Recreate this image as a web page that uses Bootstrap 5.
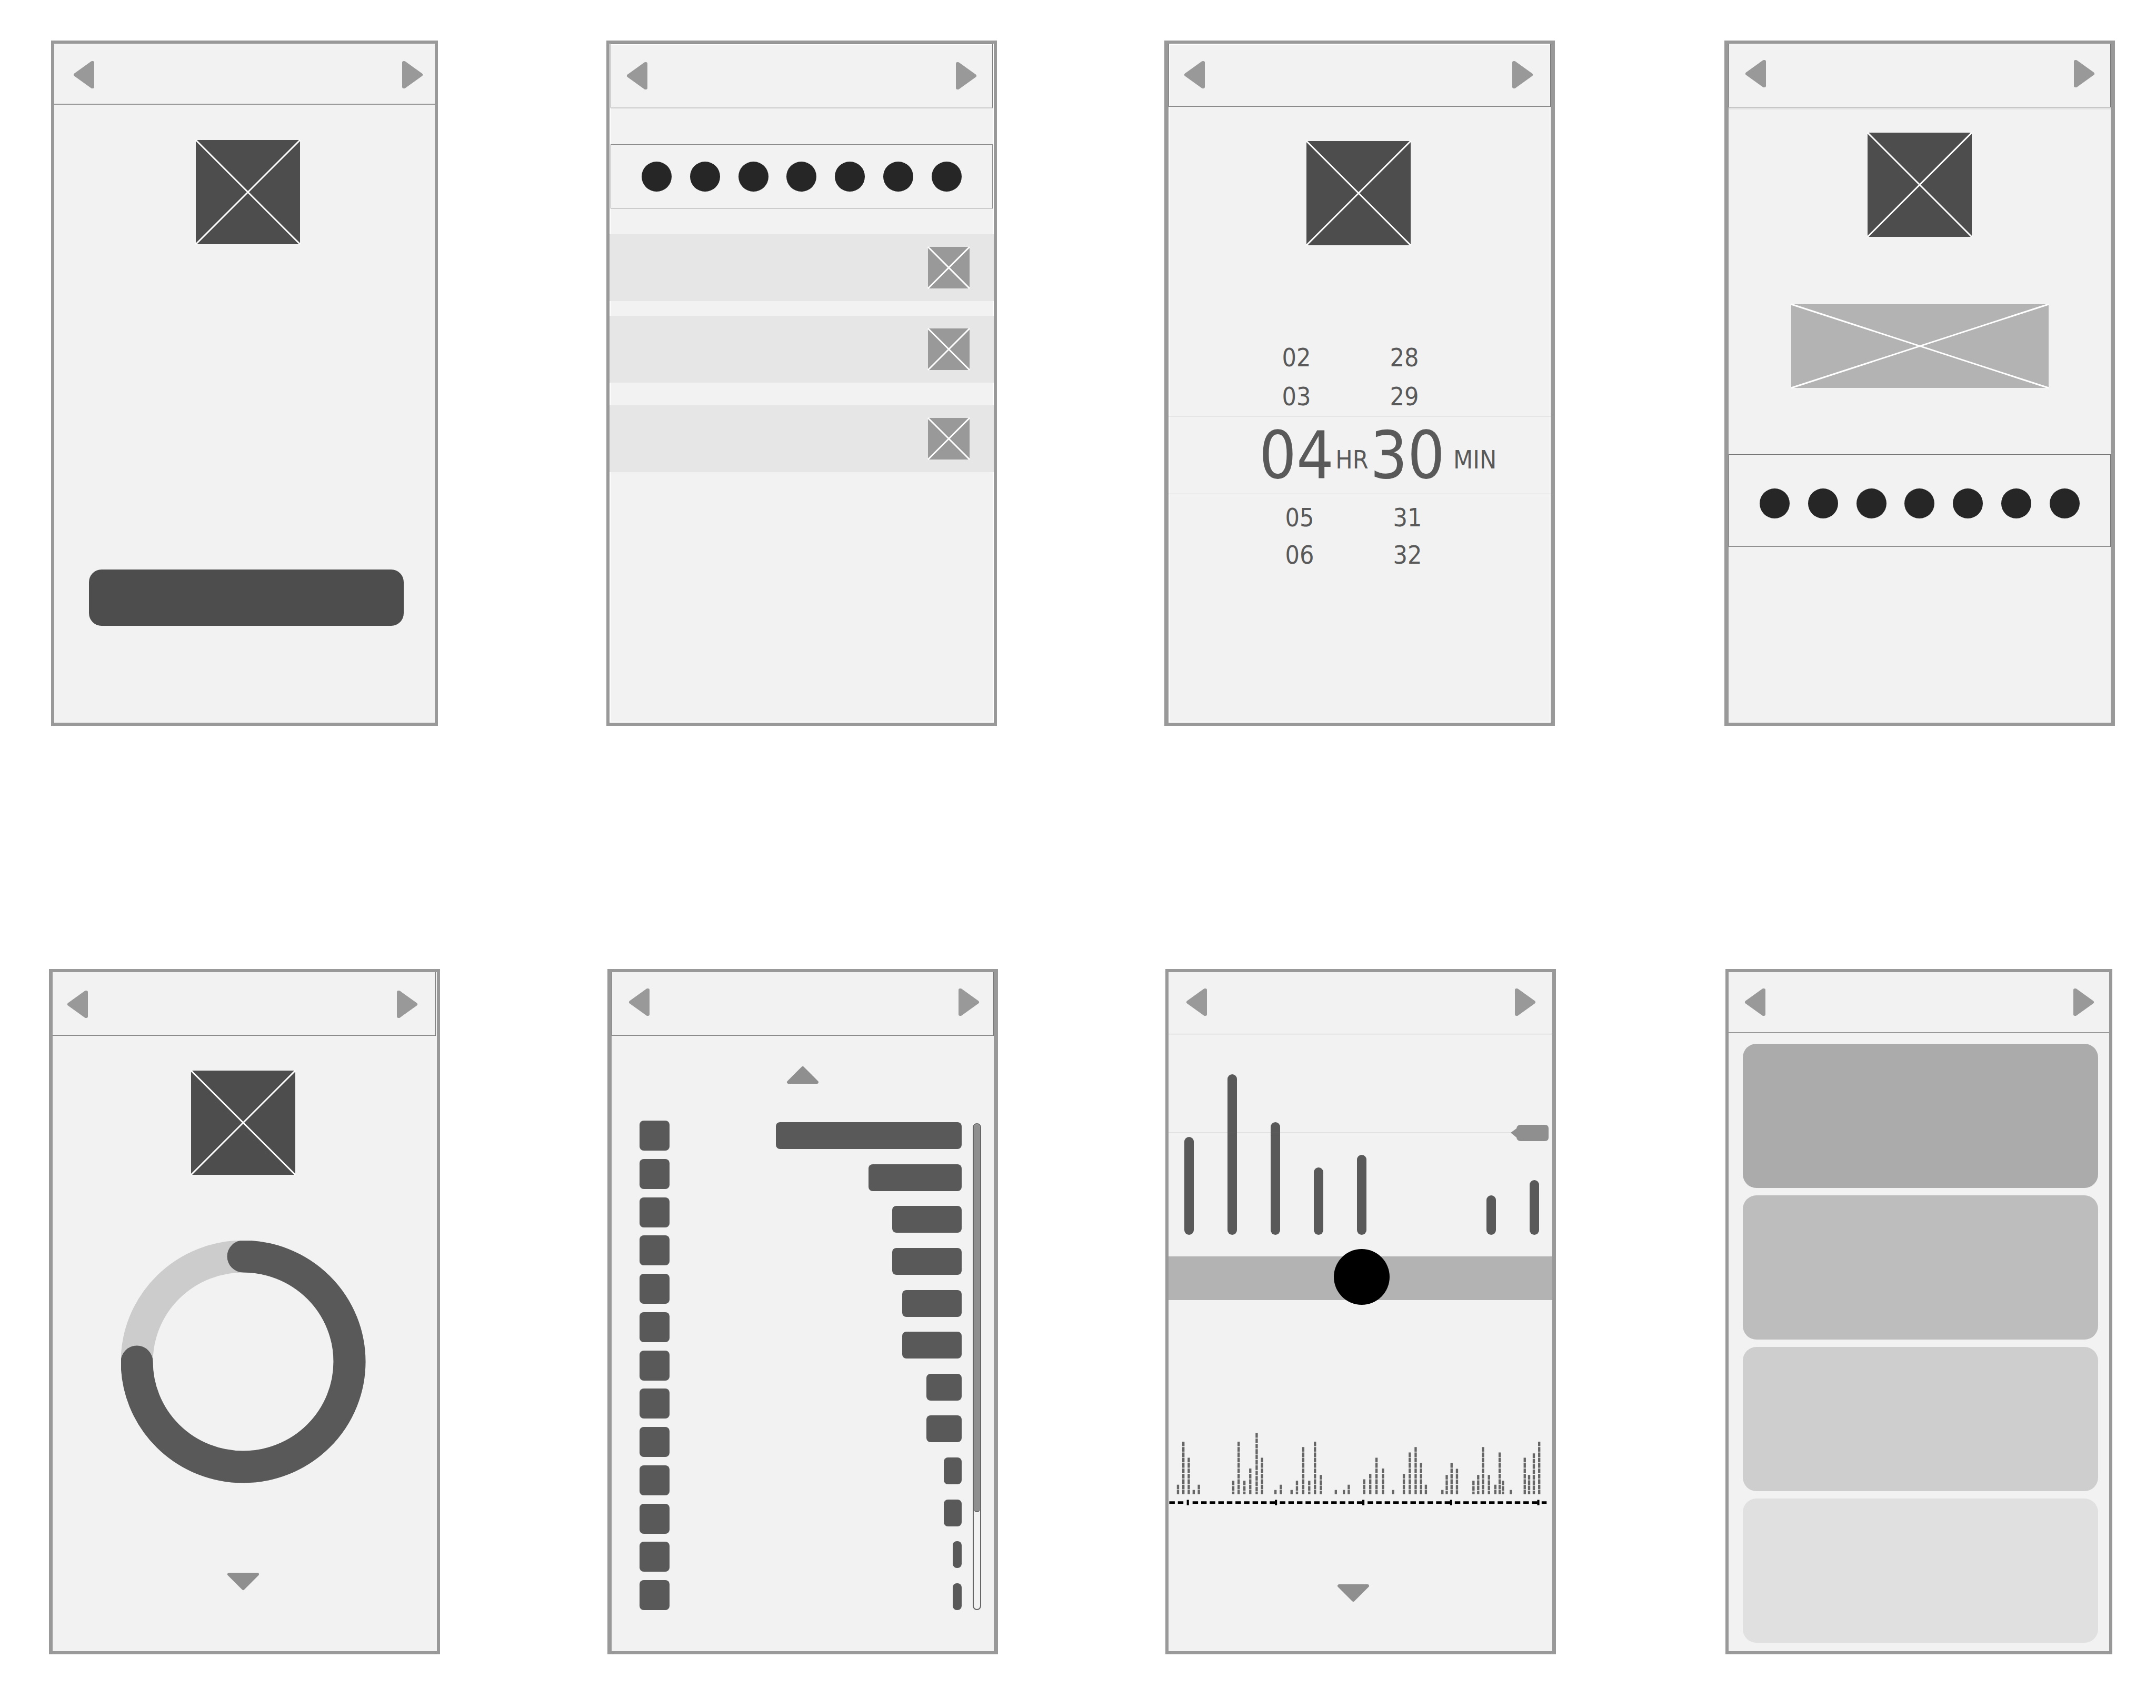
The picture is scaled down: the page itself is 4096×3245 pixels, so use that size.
<!DOCTYPE html>
<html lang="en">
<head>
<meta charset="utf-8">
<meta name="viewport" content="width=device-width, initial-scale=1">
<title>Sleep app wireframes</title>
<link rel="stylesheet" href="https://cdn.jsdelivr.net/npm/bootstrap@5.3.0/dist/css/bootstrap.min.css">
<script src="https://cdn.jsdelivr.net/npm/bootstrap@5.3.0/dist/js/bootstrap.bundle.min.js"></script>
<style>
  body { background: #fff; color: #595959; font-family: "DejaVu Sans Condensed", "Liberation Sans", sans-serif; }
  .board { padding-top: 77px; padding-bottom: 99px; row-gap: 462px; }
  .board-row { display: grid; column-gap: 318px; }
  .row-top { grid-template-columns: 737fr 742fr 742fr 746fr; padding-left: 97px; padding-right: 78px; }
  .row-bottom { grid-template-columns: 743fr 742fr 742fr 739fr; padding-left: 93px; padding-right: 83px; }

  .screen { display: flex; flex-direction: column; min-height: 1302px; background: #f2f2f2; border: 6px solid #999; min-width: 0; }
  .screen-start { margin-right: 2px; }
  .edge-light { box-shadow: inset 0 0 0 2px #fff; }
  .edge-wide { border-left-width: 8px; border-right-width: 8px; }
  .edge-left { border-left-width: 7px; }
  .edge-right { border-right-width: 7px; }

  .topbar { display: flex; align-items: flex-start; justify-content: space-between; height: var(--bar-h); padding: var(--bar-top) var(--bar-right) 0 var(--bar-left); }
  .topbar-line { border-bottom: 2px solid #999; }
  .topbar-thin { border-bottom: 1px solid #666; }
  .topbar-box { border: 1px solid #777; border-top: 0; }
  .icon-btn { display: block; padding: 0; border: 0; background: none; line-height: 0; color: #999; }
  .icon-btn svg { fill: currentColor; stroke: currentColor; stroke-width: 6px; stroke-linejoin: round; display: block; }
  .more { color: #8f8f8f; }

  .thumb { display: block; background: #4d4d4d; stroke: #fff; stroke-width: 3px; overflow: visible; }
  .thumb-sm { background: #999; }
  .thumb-wide { background: #b3b3b3; width: 489px; height: 159px; }

  .s1 { --bar-h: 116px; --bar-top: 32px; --bar-left: 36px; --bar-right: 22px; }
  .s2 { --bar-h: 123px; --bar-top: 33px; --bar-left: 29px; --bar-right: 29px; }
  .s3 { --bar-h: 120px; --bar-top: 32px; --bar-left: 28px; --bar-right: 32px; }
  .s4 { --bar-h: 121px; --bar-top: 30px; --bar-left: 30px; --bar-right: 29px; }
  .s5 { --bar-h: 121px; --bar-top: 34px; --bar-left: 27px; --bar-right: 33px; }
  .s6 { --bar-h: 121px; --bar-top: 30px; --bar-left: 31px; --bar-right: 26px; }
  .s7 { --bar-h: 118px; --bar-top: 30px; --bar-left: 33px; --bar-right: 31px; }
  .s8 { --bar-h: 116px; --bar-top: 30px; --bar-left: 30px; --bar-right: 28px; }

  .s1 .content { padding: 67px 59px 0 66px; }
  .s1 .thumb { margin-left: 203px; }
  .cta { display: block; width: 100%; height: 107px; margin-top: 618px; border: 0; border-radius: 24px; background: #4d4d4d; }

  .s2 .topbar, .s2 .day-dots { margin-left: 2px; margin-right: 2px; }
  .s2 .topbar { border-top: 1px solid #777; border-bottom: 2px solid #ccc; }
  .day-dots { display: flex; justify-content: space-between; border: 1px solid #777; padding: 32px 58px 0; }
  .day-dots span { width: 57px; height: 57px; border-radius: 50%; background: #262626; }
  .s2 .day-dots { height: 123px; margin-top: 68px; border-color: #888; border-bottom: 2px solid #ccc; }
  .rows { margin-top: 48px; display: flex; flex-direction: column; gap: 28px; }
  .rows > li { height: 127px; padding-right: 46px; background: #e6e6e6; display: flex; align-items: center; justify-content: flex-end; }
  .rows > li:last-child { margin-top: 15px; }

  .s3 .thumb { margin: 65px auto 0; }
  .s3 .content { padding-right: 4px; }
  .picker { margin-top: 176px; line-height: 1; }
  .pick { display: grid; grid-template-columns: 122px 83px 122px; align-items: center; justify-items: center; height: 74px; padding-left: 182px; font-size: 48px; }
  .pick span:last-child { grid-column: 3; }
  .pick-after .pick { height: 71px; padding-left: 188px; }
  .pick-after { padding-top: 8px; }
  .pick-now { display: grid; grid-template-columns: 122px 89px 122px 1fr; align-items: center; justify-items: center; height: 149px; padding-left: 182px; border-top: 1px solid #b3b3b3; border-bottom: 1px solid #b3b3b3; font-size: 124px; }
  .pick-now .unit { font-size: 48px; padding-top: 16px; }
  .pick-now .unit:last-child { justify-self: start; padding-left: 26px; }

  .s4 .topbar { box-shadow: 0 4px 0 #e2e2e2; }
  .s4 .thumb { margin: 48px auto 0; }
  .s4 .thumb-wide { margin-top: 128px; }
  .s4 .day-dots { height: 176px; margin-top: 126px; padding-top: 64px; }

  .s5 .topbar { margin-right: 2px; border-left: 0; }
  .s5 .content { display: flex; flex-direction: column; align-items: center; padding: 66px 6px 0 0; }
  .ring { margin-top: 125px; fill: none; stroke-width: 61px; stroke-linecap: round; }
  .s5 .more { margin-top: 170px; }

  .s6 .up { margin: 57px auto 0; }
  .list-chart { display: flex; height: 930px; margin-top: 70px; padding: 0 24px 0 53px; }
  .stack { display: flex; flex-direction: column; justify-content: space-between; }
  .stack span { display: block; background: #595959; }
  .keys span { width: 57px; height: 57px; border-radius: 8px; }
  .values { flex: 1; align-items: flex-end; padding: 3px 0 0; margin-right: 21px; }
  .values span { height: 51px; border-radius: 8px; }
  .track { width: 16px; margin-top: 5px; border: 2px solid #666; border-radius: 8px; overflow: hidden; }
  .track div { height: 80%; background: #8f8f8f; border-bottom: 2px solid #666; border-radius: 0 0 6px 6px; }

  .bars { position: relative; display: flex; align-items: flex-end; justify-content: space-between; height: 381px; padding: 0 25px 0 30px; }
  .bars > i { width: 18px; background: #595959; border-radius: 9px; }
  .goal { position: absolute; left: 0; right: 7px; top: 172px; display: flex; align-items: center; }
  .goal hr { flex: 1; margin: 0; border-top: 1px solid #666; opacity: 1; }
  .goal svg { fill: #8f8f8f; }
  .band { display: flex; align-items: center; justify-content: center; height: 83px; margin-top: 41px; padding: 0 0 6px 5px; background: #b3b3b3; }
  .knob { flex: none; width: 106px; height: 106px; padding: 0; border: 0; border-radius: 50%; background: #000; }
  .activity { display: block; width: 100%; height: 141px; margin-top: 250px; fill: none; }
  .s7 .more { margin: 149px auto 0; }
  .s7 .foot { padding-right: 28px; }

  .tiles { display: flex; flex-direction: column; gap: 14px; padding: 20px 21px 0 27px; }
  .tiles > div { height: 274px; border-radius: 26px; }
  .tone-1 { background: #ababab; }
  .tone-2 { background: #bdbdbd; }
  .tone-3 { background: #cecece; }
  .tone-4 { background: #e0e0e0; }
</style>
</head>
<body>
<svg class="d-none" aria-hidden="true">
  <symbol id="prev" viewBox="0 0 40 54"><path d="M4 27 36 4 37 4V50H36Z"/></symbol>
  <symbol id="next" viewBox="0 0 40 54"><path d="M36 27 4 4 3 4V50H4Z"/></symbol>
  <symbol id="down" viewBox="0 0 62 34"><path d="M4 3H58L31 30Z"/></symbol>
  <symbol id="up" viewBox="0 0 62 34"><path d="M4 31H58L31 4Z"/></symbol>
  <symbol id="cross" viewBox="0 0 100 100" preserveAspectRatio="none" overflow="visible"><path vector-effect="non-scaling-stroke" d="M0 0 100 100M100 0 0 100"/></symbol>
</svg>
<main class="board d-flex flex-column">
  <div class="board-row row-top">

    <section class="screen screen-start s1">
      <header class="topbar topbar-line">
        <button class="icon-btn" aria-label="Previous"><svg width="40" height="54"><use href="#prev"/></svg></button>
        <button class="icon-btn" aria-label="Next"><svg width="40" height="54"><use href="#next"/></svg></button>
      </header>
      <div class="content">
        <svg class="thumb" width="198" height="198"><use href="#cross"/></svg>
        <button class="cta" aria-label="Continue"></button>
      </div>
    </section>

    <section class="screen edge-light s2">
      <header class="topbar topbar-box">
        <button class="icon-btn" aria-label="Previous"><svg width="40" height="54"><use href="#prev"/></svg></button>
        <button class="icon-btn" aria-label="Next"><svg width="40" height="54"><use href="#next"/></svg></button>
      </header>
      <div class="day-dots"><span></span><span></span><span></span><span></span><span></span><span></span><span></span></div>
      <ul class="rows list-unstyled mb-0">
        <li><svg class="thumb thumb-sm" width="79" height="79"><use href="#cross"/></svg></li>
        <li><svg class="thumb thumb-sm" width="79" height="79"><use href="#cross"/></svg></li>
        <li><svg class="thumb thumb-sm" width="79" height="79"><use href="#cross"/></svg></li>
      </ul>
    </section>

    <section class="screen edge-light edge-wide s3">
      <header class="topbar topbar-box">
        <button class="icon-btn" aria-label="Previous"><svg width="40" height="54"><use href="#prev"/></svg></button>
        <button class="icon-btn" aria-label="Next"><svg width="40" height="54"><use href="#next"/></svg></button>
      </header>
      <div class="content">
        <svg class="thumb" width="198" height="198"><use href="#cross"/></svg>
      </div>
      <div class="picker">
        <div class="pick"><span>02</span><span>28</span></div>
        <div class="pick"><span>03</span><span>29</span></div>
        <div class="pick-now"><span>04</span><span class="unit">HR</span><span>30</span><span class="unit">MIN</span></div>
        <div class="pick-after">
          <div class="pick"><span>05</span><span>31</span></div>
          <div class="pick"><span>06</span><span>32</span></div>
        </div>
      </div>
    </section>

    <section class="screen edge-wide ms-1 s4">
      <header class="topbar topbar-box">
        <button class="icon-btn" aria-label="Previous"><svg width="40" height="54"><use href="#prev"/></svg></button>
        <button class="icon-btn" aria-label="Next"><svg width="40" height="54"><use href="#next"/></svg></button>
      </header>
      <svg class="thumb" width="198" height="198"><use href="#cross"/></svg>
      <svg class="thumb thumb-wide"><use href="#cross"/></svg>
      <div class="day-dots"><span></span><span></span><span></span><span></span><span></span><span></span><span></span></div>
    </section>
  </div>

  <div class="board-row row-bottom">

    <section class="screen edge-left s5">
      <header class="topbar topbar-box">
        <button class="icon-btn" aria-label="Previous"><svg width="40" height="54"><use href="#prev"/></svg></button>
        <button class="icon-btn" aria-label="Next"><svg width="40" height="54"><use href="#next"/></svg></button>
      </header>
      <div class="content">
        <svg class="thumb" width="198" height="198"><use href="#cross"/></svg>
        <svg class="ring" width="465" height="461" viewBox="0 0 465 461">
          <ellipse cx="232" cy="230" rx="202" ry="200" stroke="#ccc"/>
          <path d="M232 30A202 200 0 1 1 30 230" stroke="#595959"/>
        </svg>
        <button class="icon-btn more" aria-label="Scroll down"><svg width="62" height="34"><use href="#down"/></svg></button>
      </div>
    </section>

    <section class="screen edge-wide s6">
      <header class="topbar topbar-box">
        <button class="icon-btn" aria-label="Previous"><svg width="40" height="54"><use href="#prev"/></svg></button>
        <button class="icon-btn" aria-label="Next"><svg width="40" height="54"><use href="#next"/></svg></button>
      </header>
      <button class="icon-btn more up" aria-label="Scroll up"><svg width="62" height="34"><use href="#up"/></svg></button>
      <div class="list-chart">
        <div class="stack keys"><span></span><span></span><span></span><span></span><span></span><span></span><span></span><span></span><span></span><span></span><span></span><span></span><span></span></div>
        <div class="stack values">
          <span style="width:353px"></span><span style="width:177px"></span><span style="width:132px"></span><span style="width:132px"></span><span style="width:113px"></span><span style="width:113px"></span><span style="width:67px"></span><span style="width:67px"></span><span style="width:34px"></span><span style="width:34px"></span><span style="width:17px"></span><span style="width:17px"></span>
        </div>
        <div class="track"><div></div></div>
      </div>
    </section>

    <section class="screen edge-right s7">
      <header class="topbar topbar-thin">
        <button class="icon-btn" aria-label="Previous"><svg width="40" height="54"><use href="#prev"/></svg></button>
        <button class="icon-btn" aria-label="Next"><svg width="40" height="54"><use href="#next"/></svg></button>
      </header>
      <div class="bars">
        <i style="height:186px"></i><i style="height:305px"></i><i style="height:214px"></i><i style="height:128px"></i><i style="height:152px"></i><i style="height:0"></i><i style="height:0"></i><i style="height:75px"></i><i style="height:104px"></i>
        <div class="goal"><hr><svg width="72" height="31" viewBox="0 0 72 31"><path d="M0 15 11 7Q12 0 19 0H65Q72 0 72 7V24Q72 31 65 31H19Q12 31 11 24Z"/></svg></div>
      </div>
      <div class="band"><button class="knob" aria-label="Selected day"></button></div>
      <svg class="activity" viewBox="46 100 3000 580" preserveAspectRatio="none">
        <path stroke="#666" stroke-width="18" stroke-dasharray="36 6" d="M120 514V590M162 178V590M204 304V590M243 556V590M283 514V590M552 484V590M594 178V590M639 484V590M685 388V590M735 111V590M777 304V590M882 556V590M924 514V590M1008 556V590M1050 484V590M1099 220V590M1146 484V590M1191 178V590M1237 438V590M1354 556V590M1417 556V590M1455 514V590M1576 472V590M1623 430V590M1672 304V590M1723 388V590M1802 556V590M1886 430V590M1932 262V590M1978 220V590M2020 346V590M2058 514V590M2187 556V590M2221 438V590M2259 346V590M2301 390V590M2430 484V590M2467 438V590M2505 220V590M2551 438V590M2601 514V590M2635 262V590M2661 484V590M2722 556V590M2831 304V590M2865 438V590M2902 270V590M2944 178V590"/>
        <path stroke="#000" stroke-width="19" stroke-dasharray="43 24" d="M52 654H186M234 654H886M916 654H1569M1602 654H2255M2284 654H2937M2963 654H3002"/>
        <path stroke="#000" stroke-width="17" d="M197 633V675M886 633V675M1569 633V675M2255 633V675M2937 633V675"/>
      </svg>
      <div class="foot"><button class="icon-btn more" aria-label="Scroll down"><svg width="62" height="34"><use href="#down"/></svg></button></div>
    </section>

    <section class="screen ms-1 s8">
      <header class="topbar topbar-line">
        <button class="icon-btn" aria-label="Previous"><svg width="40" height="54"><use href="#prev"/></svg></button>
        <button class="icon-btn" aria-label="Next"><svg width="40" height="54"><use href="#next"/></svg></button>
      </header>
      <div class="tiles"><div class="tone-1"></div><div class="tone-2"></div><div class="tone-3"></div><div class="tone-4"></div></div>
    </section>
  </div>
</main>
</body>
</html>
